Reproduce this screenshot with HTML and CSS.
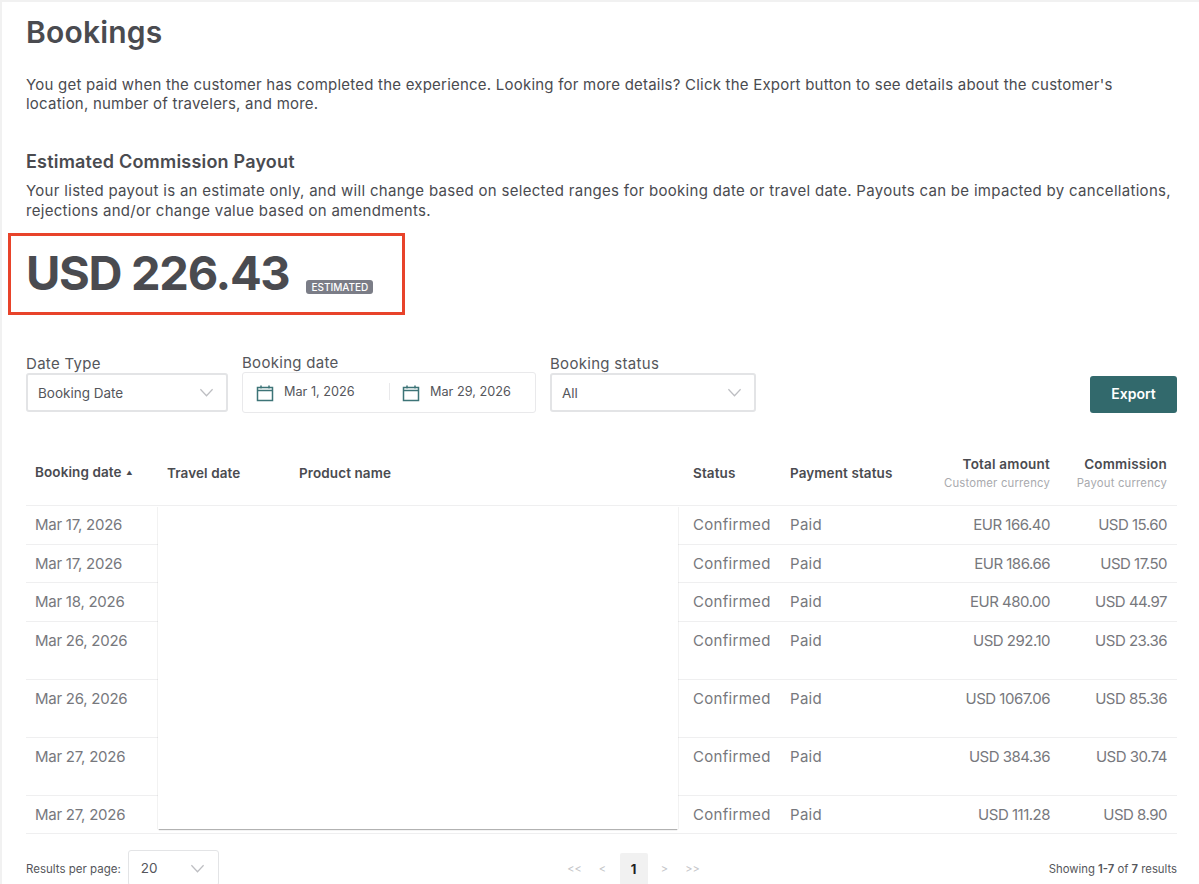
FILE: index.html
```html
<!DOCTYPE html>
<html lang="en">
<head>
<meta charset="utf-8">
<title>Bookings</title>
<link rel="stylesheet" href="styles.css">
</head>
<body>
<main class="page">
  <h1 class="title">Bookings</h1>
  <p class="intro">You get paid when the customer has completed the experience. Looking for more details? Click the Export button to see details about the customer's location, number of travelers, and more.</p>
  <h2 class="subtitle">Estimated Commission Payout</h2>
  <p class="note">Your listed payout is an estimate only, and will change based on selected ranges for booking date or travel date. Payouts can be impacted by cancellations, rejections and/or change value based on amendments.</p>
  <div class="payout">
    <span class="amount">USD 226.43</span>
    <span class="badge">ESTIMATED</span>
  </div>

  <section class="filters">
    <div class="field field-type">
      <label class="label">Date Type</label>
      <div class="select"><span>Booking Date</span>
        <svg class="chev" viewBox="0 0 16 9"><path d="M1.500 1 8 8l6.500-7"/></svg></div>
    </div>
    <div class="field field-date">
      <label class="label">Booking date</label>
      <div class="range">
        <div class="date">
          <svg class="cal" viewBox="0 0 18 18"><path d="M1.500 3.500h15v13h-15zM1.500 6.500h15M5 1.500v3M13 1.500v3"/></svg>
          <span>Mar 1, 2026</span>
        </div>
        <div class="date date-end">
          <svg class="cal" viewBox="0 0 18 18"><path d="M1.500 3.500h15v13h-15zM1.500 6.500h15M5 1.500v3M13 1.500v3"/></svg>
          <span>Mar 29, 2026</span>
        </div>
      </div>
    </div>
    <div class="field field-status">
      <label class="label">Booking status</label>
      <div class="select"><span>All</span>
        <svg class="chev" viewBox="0 0 16 9"><path d="M1.500 1 8 8l6.500-7"/></svg></div>
    </div>
    <button class="export">Export</button>
  </section>

  <section class="table">
    <div class="row head">
      <div>Booking date <span class="sort">▲</span></div>
      <div>Travel date</div>
      <div>Product name</div>
      <div>Status</div>
      <div>Payment status</div>
      <div class="num">Total amount<small>Customer currency</small></div>
      <div class="num">Commission<small>Payout currency</small></div>
    </div>
    <div class="row"><div class="day">Mar 17, 2026</div><div></div><div></div><div class="word">Confirmed</div><div class="word">Paid</div><div class="num">EUR 166.40</div><div class="num">USD 15.60</div></div>
    <div class="row"><div class="day">Mar 17, 2026</div><div></div><div></div><div class="word">Confirmed</div><div class="word">Paid</div><div class="num">EUR 186.66</div><div class="num">USD 17.50</div></div>
    <div class="row"><div class="day">Mar 18, 2026</div><div></div><div></div><div class="word">Confirmed</div><div class="word">Paid</div><div class="num">EUR 480.00</div><div class="num">USD 44.97</div></div>
    <div class="row tall"><div class="day">Mar 26, 2026</div><div></div><div></div><div class="word">Confirmed</div><div class="word">Paid</div><div class="num">USD 292.10</div><div class="num">USD 23.36</div></div>
    <div class="row tall"><div class="day">Mar 26, 2026</div><div></div><div></div><div class="word">Confirmed</div><div class="word">Paid</div><div class="num">USD 1067.06</div><div class="num">USD 85.36</div></div>
    <div class="row tall"><div class="day">Mar 27, 2026</div><div></div><div></div><div class="word">Confirmed</div><div class="word">Paid</div><div class="num">USD 384.36</div><div class="num">USD 30.74</div></div>
    <div class="row"><div class="day">Mar 27, 2026</div><div></div><div></div><div class="word">Confirmed</div><div class="word">Paid</div><div class="num">USD 111.28</div><div class="num">USD 8.90</div></div>
    <div class="redaction"></div>
  </section>

  <footer class="pager">
    <div class="per-page">
      <span>Results per page:</span>
      <div class="per-select"><span>20</span>
        <svg class="chev" viewBox="0 0 16 9"><path d="M1.500 1 8 8l6.500-7"/></svg></div>
    </div>
    <nav class="pages">
      <span class="pg">&lt;&lt;</span>
      <span class="pg">&lt;</span>
      <span class="pg current">1</span>
      <span class="pg">&gt;</span>
      <span class="pg">&gt;&gt;</span>
    </nav>
    <div class="showing">Showing <b>1-7</b> of <b>7</b> results</div>
  </footer>
</main>
</body>
</html>
```
FILE: styles.css
```css
* { box-sizing: border-box; }
html, body { margin: 0; height: 100%; }
body {
  background: #fff;
  color: #4a4b50;
  font-family: Inter, "Noto Sans", sans-serif;
  overflow: hidden;
}
.page {
  height: 884px;
  padding: 0 22px 0 24px;
  border-top: 2px solid #f1f1f1;
  border-left: 2px solid #f1f1f1;
  overflow: hidden;
}
.title {
  margin: 12px 0 0;
  font-size: 30px;
  line-height: 36px;
  font-weight: 600;
  letter-spacing: .2px;
  color: #4a4b50;
}
.intro, .note {
  margin: 0;
  font-size: 15px;
}
.intro { margin-top: 25px; line-height: 19px; letter-spacing: .22px; max-width: 1125px; }
.subtitle {
  margin: 37px 0 0;
  font-size: 18px;
  line-height: 24px;
  font-weight: 600;
  letter-spacing: .2px;
}
.note { margin-top: 7px; line-height: 20px; letter-spacing: .3px; }
.payout {
  display: flex;
  align-items: flex-end;
  width: 397px;
  height: 82px;
  margin: 12px 0 0 -18px;
  padding: 0 0 11px 15px;
  border: 3px solid #e8432a;
}
.amount {
  font-size: 47px;
  line-height: 56px;
  font-weight: 700;
  letter-spacing: -1.300px;
  color: #4a4b50;
}
.badge {
  margin: 0 0 7px 17px;
  padding: 0 5px;
  height: 14px;
  font-size: 10px;
  line-height: 14px;
  font-weight: 500;
  color: #fff;
  background: #7b7d87;
  border-radius: 3px;
}
.filters {
  display: flex;
  align-items: flex-end;
  height: 98px;
}
.field { display: flex; flex-direction: column; }
.label {
  font-size: 15px;
  line-height: 19px;
  letter-spacing: .3px;
  color: #55565b;
}
.field-type { width: 202px; margin-right: 14px; }
.field-date { width: 294px; margin-right: 14px; }
.field-status { width: 206px; }
.select {
  display: flex;
  align-items: center;
  justify-content: space-between;
  height: 39px;
  margin: 1px 0 1px;
  padding: 0 12px 0 10px;
  border: 2px solid #e3e4e6;
  border-radius: 3px;
  font-size: 13.500px;
  color: #55565b;
}
.field-type .label, .field-status .label { margin-bottom: -1px; }
.chev { width: 15px; height: 9px; fill: none; stroke: #bdbec2; stroke-width: 1.300; }
.range {
  display: flex;
  height: 41px;
  border: 1px solid #e9e9eb;
  border-radius: 3px;
  font-size: 12.700px;
  color: #55565b;
}
.date { display: flex; align-items: center; gap: 10px; padding-left: 13px; width: 147px; }
.date span { margin-bottom: 3px; }
.date-end { position: relative; }
.date-end::before {
  content: "";
  position: absolute;
  left: 0;
  top: 10px;
  bottom: 12px;
  width: 1px;
  background: #e9e9eb;
}
.cal { width: 18px; height: 18px; fill: none; stroke: #3d7477; stroke-width: 1.500; }
.export {
  margin-left: auto;
  width: 87px;
  height: 37px;
  padding: 0 0 2px;
  border: 0;
  border-radius: 3px;
  background: #32696c;
  color: #fff;
  font: 600 14px Inter, "Noto Sans", sans-serif;
}
.table { position: relative; margin-top: 37px; }
.row {
  display: grid;
  grid-template-columns: 132px 132px 394px 97px 118px 1fr 117px;
  height: 38.500px;
  padding: 9px 0 0;
  border-bottom: 1px solid #efeff0;
  font-size: 15px;
  line-height: 20px;
  color: #77787d;
}
.row > div { padding-left: 9px; white-space: nowrap; }
.row > .num { padding: 0 10px 0 0; text-align: right; letter-spacing: -.5px; }
.row > .day { letter-spacing: -.25px; }
.row > .word { letter-spacing: .3px; }
.row.tall { height: 58px; }
.row.head {
  height: 56px;
  padding: 0 0 10px;
  font-size: 13.500px;
  font-weight: 600;
  color: #4a4b50;
  align-items: center;
  letter-spacing: .1px;
}
.row.head > .num { letter-spacing: .2px; }
.sort { font-size: 6px; vertical-align: 2px; margin-left: 1px; }
.head small {
  display: block;
  font-size: 11.300px;
  line-height: 18px;
  font-weight: 400;
  color: #a9aaae;
}
.redaction {
  position: absolute;
  left: 132px;
  top: 57px;
  width: 520px;
  height: 322px;
  background: #fff;
  box-shadow: 0 0 1px rgba(60, 60, 60, .4), 0 2px 1px -1px rgba(60, 60, 60, .35);
  clip-path: inset(0 -4px -4px -4px);
}
.pager {
  display: grid;
  grid-template-columns: 1fr auto 1fr;
  align-items: start;
  margin-top: 16px;
}
.per-page { display: flex; align-items: flex-start; gap: 7px; font-size: 11.500px; line-height: 38px; color: #55565b; }
.per-select {
  display: flex;
  align-items: center;
  justify-content: space-between;
  width: 91px;
  height: 36px;
  padding: 0 13px 0 12px;
  border: 1px solid #e3e4e6;
  border-radius: 3px;
  font-size: 13.500px;
}
.pages { display: flex; align-items: center; margin-left: 64px; }
.pg {
  width: 28px;
  height: 32px;
  margin-top: 3px;
  line-height: 32px;
  text-align: center;
  font-size: 11px;
  color: #c4c5c8;
}
.current {
  margin: 3px 3px 0;
  background: #f1f1f1;
  border-radius: 2px;
  color: #222;
  font-size: 13px;
  font-weight: 700;
}
.showing { justify-self: end; font-size: 11.300px; line-height: 38px; color: #55565b; }
.showing b { font-weight: 600; }
```
